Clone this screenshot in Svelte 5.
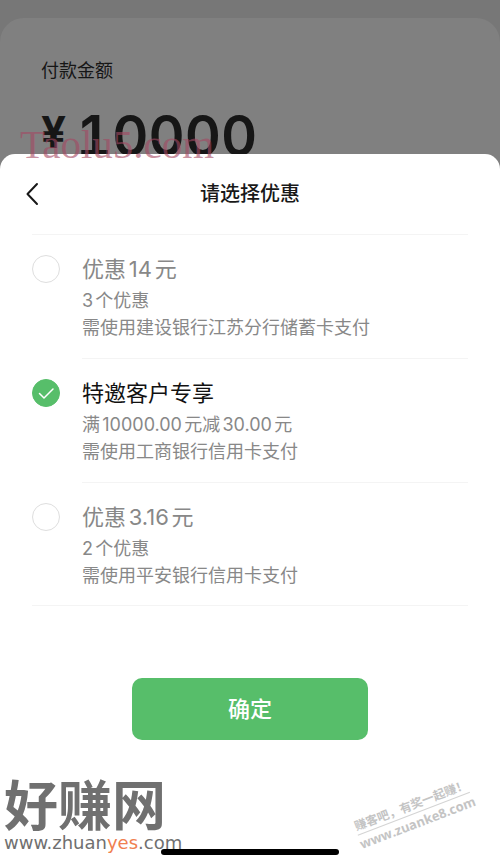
<script lang="ts">

    interface Offer {
        id: string;
        title: string;
        details: string[];
    }

    const offers: Offer[] = [
        {
            id: "ccb",
            title: "优惠14元",
            details: ["3个优惠", "需使用建设银行江苏分行储蓄卡支付"],
        },
        {
            id: "icbc",
            title: "特邀客户专享",
            details: ["满10000.00元减30.00元", "需使用工商银行信用卡支付"],
        },
        {
            id: "pab",
            title: "优惠3.16元",
            details: ["2个优惠", "需使用平安银行信用卡支付"],
        },
    ];

    let selected = $state("icbc");

</script>

<div class="screen">
    <section class="payment">
        <p class="payment-label">付款金额</p>
        <p class="payment-amount">
            <span class="payment-currency">¥</span>
            <span class="payment-value">10000</span>
        </p>
    </section>

    <form class="sheet" onsubmit={(event) => event.preventDefault()}>
        <header class="sheet-header">
            <button class="back-button" type="button" aria-label="返回">
                <svg width="14" height="24" viewBox="0 0 14 24" aria-hidden="true">
                    <path d="M12 2 2.5 12 12 22" />
                </svg>
            </button>
            <h1 class="sheet-title">请选择优惠</h1>
        </header>

        <div class="offers" role="radiogroup" aria-label="请选择优惠">
            {#each offers as offer (offer.id)}
                <label class="offer" class:offer-selected={selected === offer.id}>
                    <span class="offer-radio">
                        <input type="radio" name="offer" value={offer.id} bind:group={selected} />
                        <svg viewBox="0 0 28 28" aria-hidden="true">
                            <path d="M7.5 14.5 12 19 21 10" />
                        </svg>
                    </span>
                    <span class="offer-body">
                        <span class="offer-title">{offer.title}</span>
                        {#each offer.details as line}
                            <span class="offer-detail">{line}</span>
                        {/each}
                    </span>
                </label>
            {/each}
        </div>

        <button class="confirm-button" type="submit">确定</button>
    </form>

    <div class="home-indicator"></div>

    <div class="mark-taolu">Taolu5.com</div>

    <div class="mark-zhuanyes">
        <span class="mark-zhuanyes-name">好赚网</span>
        <span class="mark-zhuanyes-url">www.zhuan<em>yes</em>.com</span>
    </div>

    <div class="mark-zuanke">
        <span class="mark-zuanke-slogan">赚客吧，有奖一起赚！</span>
        <span class="mark-zuanke-url">www.zuanke8.com</span>
    </div>
</div>

<style>
    :global(body) {
        margin: 0;
        background: #777;
    }

    .screen {
        position: relative;
        display: flex;
        flex-direction: column;
        box-sizing: border-box;
        min-height: 100vh;
        padding-top: 18px;
        overflow: hidden;
        background: #777;
        font-family: Inter, "Noto Sans CJK SC", sans-serif;
        text-autospace: normal;
    }

    .payment {
        box-sizing: border-box;
        height: 160px;
        padding: 40px 41px 0;
        border-radius: 24px 24px 0 0;
        background: #808080;
        color: #161616;
    }

    .payment-label {
        margin: 0;
        font-size: 18px;
        line-height: 26px;
    }

    .payment-amount {
        display: flex;
        align-items: flex-start;
        gap: 10px;
        margin: 24px 0 0;
        font-weight: 600;
    }

    .payment-currency {
        font-size: 44px;
        font-weight: 700;
        line-height: 48px;
    }

    .payment-value {
        font-size: 56px;
        line-height: 56px;
        font-variant-numeric: tabular-nums;
    }

    .sheet {
        display: flex;
        flex: 1;
        flex-direction: column;
        box-sizing: border-box;
        margin-top: -24px;
        padding: 0 32px 126px;
        border-radius: 15px 15px 0 0;
        background: #fff;
    }

    .sheet-header {
        display: grid;
        grid-template-columns: 24px 1fr 24px;
        align-items: center;
        height: 80px;
    }

    .back-button {
        display: flex;
        align-items: center;
        justify-content: center;
        width: 24px;
        height: 40px;
        margin-left: -12px;
        padding: 0;
        border: 0;
        background: transparent;
        cursor: pointer;
    }

    .back-button path {
        fill: none;
        stroke: #181818;
        stroke-width: 2;
        stroke-linecap: round;
        stroke-linejoin: round;
    }

    .sheet-title {
        margin: 0;
        color: #181818;
        font-size: 20px;
        font-weight: 500;
        line-height: 28px;
        text-align: center;
    }

    .offers {
        border-top: 1px solid #f4f4f4;
        border-bottom: 1px solid #f4f4f4;
    }

    .offer {
        display: grid;
        grid-template-columns: 28px 1fr;
        column-gap: 22px;
        color: #888;
        cursor: pointer;
    }

    .offer-radio {
        display: grid;
        width: 28px;
        height: 28px;
        margin-top: 20px;
    }

    .offer-radio input,
    .offer-radio svg {
        grid-area: 1 / 1;
        box-sizing: border-box;
        width: 28px;
        height: 28px;
        margin: 0;
    }

    .offer-radio input {
        appearance: none;
        border: 1px solid #dedede;
        border-radius: 50%;
        background: #fff;
        cursor: pointer;
    }

    .offer-radio input:checked {
        border-color: #57be6a;
        background: #57be6a;
    }

    .offer-radio svg {
        visibility: hidden;
        pointer-events: none;
    }

    .offer-radio input:checked + svg {
        visibility: visible;
    }

    .offer-radio path {
        fill: none;
        stroke: #fff;
        stroke-width: 1.5;
        stroke-linecap: round;
        stroke-linejoin: round;
    }

    .offer-body {
        display: flex;
        flex-direction: column;
        padding: 19px 0 17px;
        border-bottom: 1px solid #f4f4f4;
    }

    .offer:last-child .offer-body {
        padding-bottom: 16px;
        border-bottom: 0;
    }

    .offer-title {
        margin-bottom: 3px;
        font-size: 22px;
        line-height: 30px;
    }

    .offer-selected .offer-title {
        color: #111;
    }

    .offer-detail {
        font-size: 18px;
        line-height: 27px;
    }

    .confirm-button {
        align-self: center;
        width: 236px;
        height: 62px;
        margin-top: 72px;
        padding: 0;
        border: 0;
        border-radius: 10px;
        background: #57be6a;
        color: #fff;
        font-family: inherit;
        font-size: 22px;
        font-weight: 500;
        line-height: 30px;
        cursor: pointer;
    }

    .home-indicator {
        position: absolute;
        left: 50%;
        bottom: 11px;
        width: 178px;
        height: 6px;
        border-radius: 3px;
        background: #000;
        transform: translateX(-50%);
    }

    .mark-taolu {
        position: absolute;
        top: 119px;
        left: 20px;
        color: rgba(165, 72, 98, 0.6);
        font-family: "Liberation Serif", serif;
        font-size: 41px;
        line-height: 50px;
        pointer-events: none;
    }

    .mark-zhuanyes {
        position: absolute;
        bottom: 14px;
        left: 4px;
        display: flex;
        flex-direction: column;
        color: #707070;
        pointer-events: none;
    }

    .mark-zhuanyes-name {
        font-size: 54px;
        font-weight: 700;
        line-height: 54px;
    }

    .mark-zhuanyes-url {
        font-family: "DejaVu Sans", sans-serif;
        font-size: 18px;
        line-height: 18px;
    }

    .mark-zhuanyes-url em {
        color: #f08050;
        font-style: normal;
    }

    .mark-zuanke {
        position: absolute;
        right: 24px;
        bottom: 34px;
        display: flex;
        flex-direction: column;
        align-items: center;
        color: #c4c4c4;
        font-weight: 700;
        transform: rotate(-21deg);
        pointer-events: none;
    }

    .mark-zuanke-slogan {
        border-bottom: 1px solid #d4d4d4;
        font-size: 12px;
        line-height: 17px;
    }

    .mark-zuanke-url {
        font-family: "Open Sans", sans-serif;
        font-size: 13px;
        line-height: 18px;
    }
</style>
